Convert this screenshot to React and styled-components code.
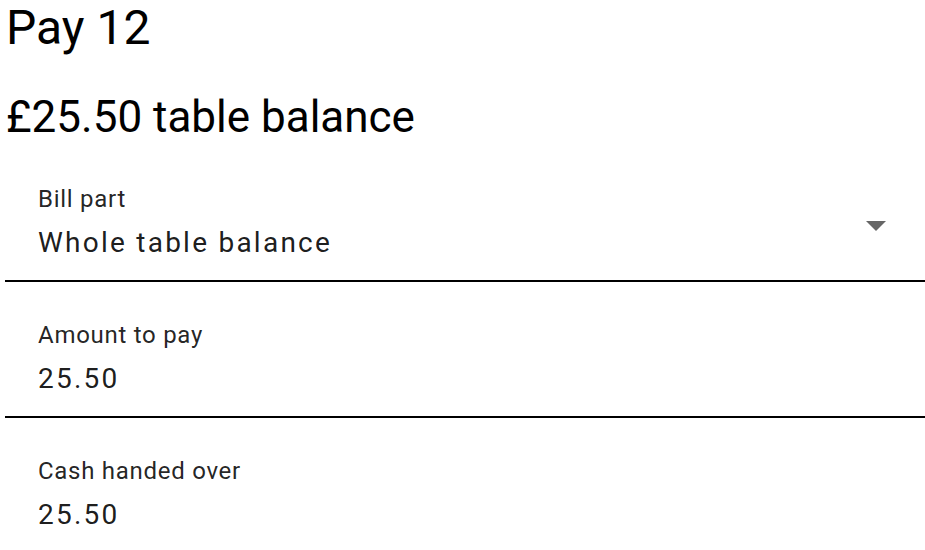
import styled, { createGlobalStyle } from 'styled-components';

const GlobalStyle = createGlobalStyle`
	html, body {
		margin: 0;
		padding: 0;
		background: #fff;
	}
	body {
		font-family: Roboto, 'Liberation Sans', sans-serif;
		color: rgba(0, 0, 0, 0.87);
	}
`;

const Page = styled.div`
	width: 925px;
	padding-left: 5px;
	box-sizing: border-box;
`;

const Title = styled.h1`
	margin: 0 0 0 1px;
	font-size: 48px;
	line-height: 56px;
	font-weight: 400;
	color: #000;
`;

const Balance = styled.h2`
	margin: 35px 0 0 1px;
	font-size: 44px;
	line-height: 52px;
	font-weight: 400;
	color: #000;
`;

const Form = styled.div`
	display: flex;
	flex-direction: column;
	gap: 39px;
	margin-top: 42px;
`;

const Field = styled.div`
	position: relative;
	display: flex;
	flex-direction: column;
	padding-left: 33px;
	height: ${(p) => (p.last ? 'auto' : '97px')};
	border-bottom: ${(p) => (p.last ? 'none' : '2px solid #000')};
	box-sizing: border-box;
`;

const Label = styled.label`
	font-size: 24px;
	line-height: 28px;
	letter-spacing: 0.03em;
	color: rgba(0, 0, 0, 0.87);
`;

const Value = styled.div`
	margin-top: 13px;
	font-size: 28px;
	line-height: 34px;
	letter-spacing: 0.08em;
	color: rgba(0, 0, 0, 0.9);
`;

const Arrow = styled.svg`
	position: absolute;
	right: 39px;
	top: 36px;
	width: 20px;
	height: 10px;
	fill: rgba(0, 0, 0, 0.6);
`;

function App() {
	return (
		<Page>
			<GlobalStyle />
			<Title>Pay 12</Title>
			<Balance>£25.50 table balance</Balance>
			<Form>
				<Field>
					<Label>Bill part</Label>
					<Value>Whole table balance</Value>
					<Arrow viewBox='0 0 20 10'>
						<path d='M0 0 L10 10 L20 0 Z' />
					</Arrow>
				</Field>
				<Field>
					<Label>Amount to pay</Label>
					<Value>25.50</Value>
				</Field>
				<Field last>
					<Label>Cash handed over</Label>
					<Value>25.50</Value>
				</Field>
			</Form>
		</Page>
	);
}

export default App;
